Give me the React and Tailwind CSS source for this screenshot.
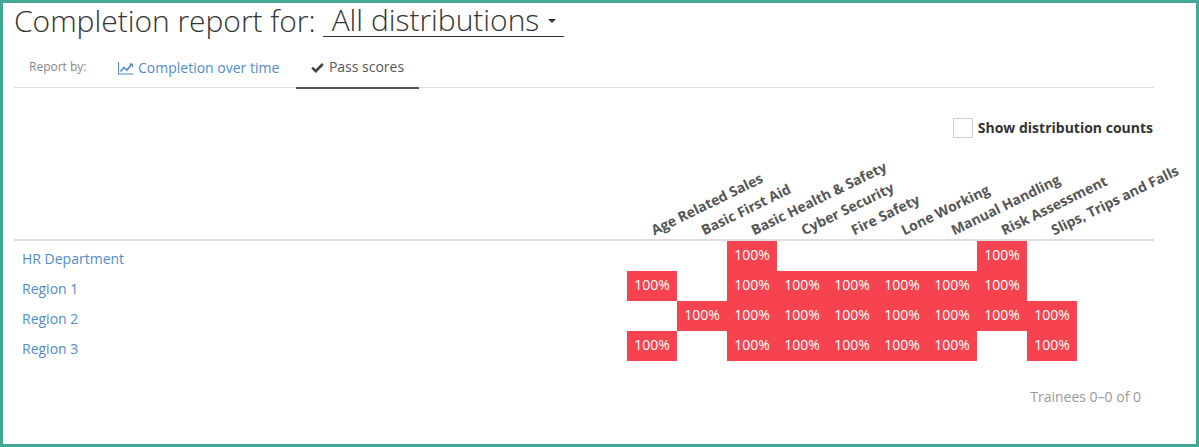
import React from 'react'

const courses = [
  'Age Related Sales',
  'Basic First Aid',
  'Basic Health & Safety',
  'Cyber Security',
  'Fire Safety',
  'Lone Working',
  'Manual Handling',
  'Risk Assessment',
  'Slips, Trips and Falls',
]

const rows = [
  { name: 'HR Department', scores: [0, 0, 1, 0, 0, 0, 0, 1, 0] },
  { name: 'Region 1', scores: [1, 0, 1, 1, 1, 1, 1, 1, 0] },
  { name: 'Region 2', scores: [0, 1, 1, 1, 1, 1, 1, 1, 1] },
  { name: 'Region 3', scores: [1, 0, 1, 1, 1, 1, 1, 0, 1] },
]

function LineChartIcon() {
  return (
    <svg width="16" height="14" viewBox="0 0 16 14" className="mr-1 text-[#4f8ccb]">
      <path d="M0.5 1v12h15" fill="none" stroke="currentColor" strokeWidth="1.2" />
      <path d="M2.5 10.5l3.5-4 3 2.5 4-5" fill="none" stroke="currentColor" strokeWidth="1.6" />
      <path d="M11 2.5h4v4z" fill="currentColor" />
    </svg>
  )
}

function CheckIcon() {
  return (
    <svg width="13" height="11" viewBox="0 0 13 11" className="mr-[5px] text-[#444]">
      <path d="M1.2 5.6l3.6 3.6 7-7.2" fill="none" stroke="currentColor" strokeWidth="2.6" />
    </svg>
  )
}

export default function App() {
  return (
    <div className="h-[447px] w-[1199px] border-[3px] border-[#45a795] bg-white font-['Open_Sans',sans-serif] text-[#333]">
      <div className="w-[1140px] ml-[11px]">
        <div className="flex items-start h-[36px] text-[30px] font-light leading-[36px] tracking-[-0.03px] text-[#333]">
          <span>Completion report for:</span>
          <span className="flex items-center ml-[7px] w-[241px] h-[34px] pl-[9px] border-b border-[#333]">
            All distributions
            <span className="ml-[9px] mt-[3px] w-0 h-0 border-x-[4px] border-x-transparent border-t-[4px] border-t-[#333]"></span>
          </span>
        </div>

        <div className="flex items-start h-[49px] pt-[7px] border-b border-[#ddd]">
          <span className="flex items-center ml-[15px] w-[89px] h-[41px] pt-[1px] text-xs text-[#888]">Report by:</span>
          <a className="flex items-center w-[178px] h-[42px] pt-[2px] text-sm text-[#4f8ccb]">
            <LineChartIcon />
            Completion over time
          </a>
          <a className="flex items-center justify-center w-[123px] h-[43px] pt-[1px] text-sm text-[#555] border-b-2 border-[#555]">
            <CheckIcon />
            Pass scores
          </a>
        </div>

        <div className="flex items-center justify-end h-[22px] mt-[29px] pr-[1px]">
          <span className="w-5 h-5 mr-[5px] border border-[#ccc]"></span>
          <span className="text-sm font-bold text-[#333]">Show distribution counts</span>
        </div>

        <div className="relative h-[102px] border-b-2 border-[#ddd]">
          {courses.map((course, i) => (
            <span
              key={course}
              style={{ left: 642 + i * 50 }}
              className="absolute bottom-0 origin-bottom-left -rotate-[26deg] whitespace-nowrap text-sm leading-[18px] font-bold text-[#555]"
            >
              {course}
            </span>
          ))}
        </div>

        {rows.map(row => (
          <div key={row.name} className="flex h-[30px]">
            <a className="w-[613px] pl-2 pt-[8px] text-sm text-[#4f8ccb]">{row.name}</a>
            {row.scores.map((score, i) => (
              <div
                key={i}
                className={`w-[50px] h-[30px] flex items-center justify-center pb-[2px] text-sm text-white ${score ? 'bg-[#f6434f]' : ''}`}
              >
                {score ? '100%' : ''}
              </div>
            ))}
          </div>
        ))}

        <div className="mt-[26px] pr-[13px] text-right text-sm text-[#999]">Trainees 0–0 of 0</div>
      </div>
    </div>
  )
}
